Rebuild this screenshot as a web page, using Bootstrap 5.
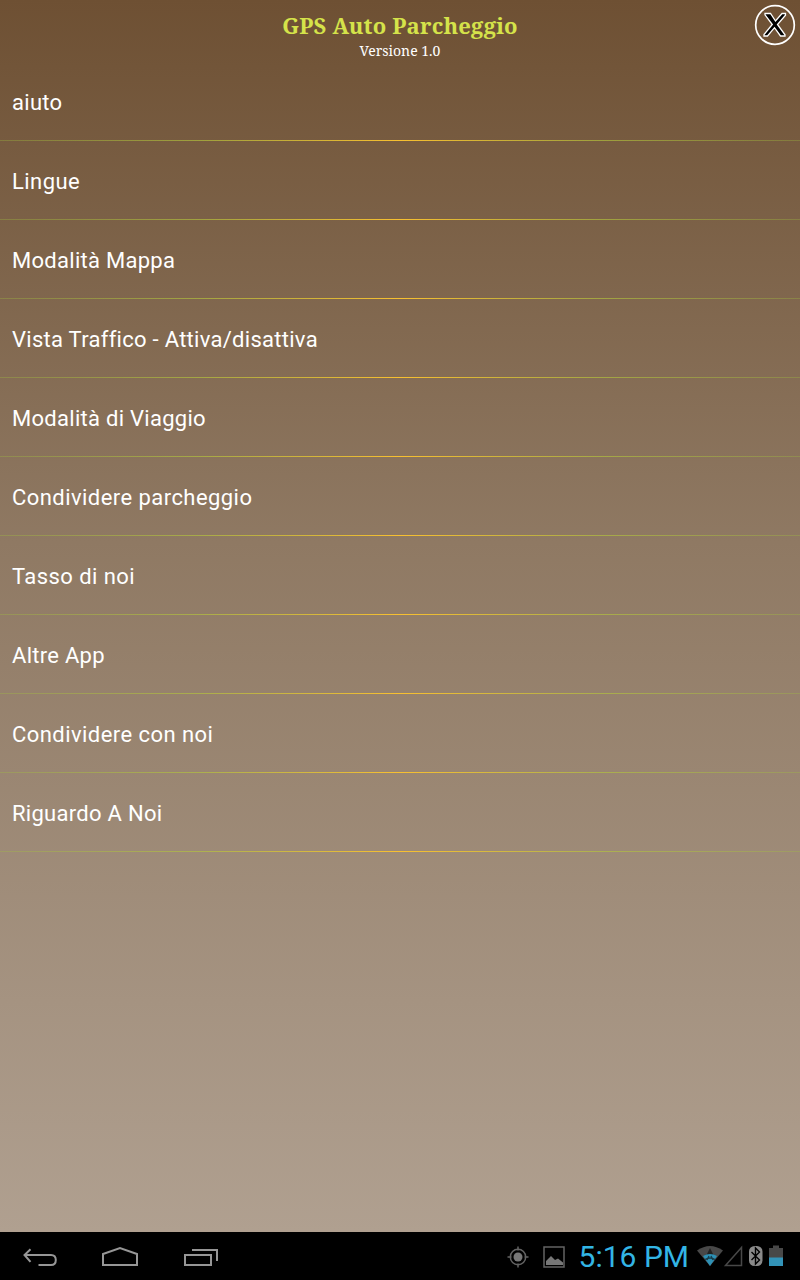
<!DOCTYPE html>
<html lang="it">
<head>
<meta charset="utf-8">
<meta name="viewport" content="width=device-width, initial-scale=1">
<title>GPS Auto Parcheggio</title>
<link href="https://cdn.jsdelivr.net/npm/bootstrap@5.3.0/dist/css/bootstrap.min.css" rel="stylesheet">
<style>
body{height:1280px;overflow:hidden;background:#000;font-family:Roboto,"Liberation Sans",sans-serif}
.screen{background:linear-gradient(#6e5033,#8f7963 44%,#b0a090)}
.heading{height:62px;font-family:"Noto Serif","DejaVu Serif Condensed","DejaVu Serif",serif}
.heading h1{font-size:22px;line-height:30px;padding-top:10px;color:#d5e34a;letter-spacing:.2px}
.heading p{font-size:14px;line-height:20px;padding-top:1px}
.close-btn{top:4px;right:4px;width:42px;height:42px}
.menu-row{height:79px;padding:1px 12px 0;font-size:22px;letter-spacing:.28px;color:#fff;text-decoration:none;background:linear-gradient(90deg,#a0c03c50,#b4c43ca8 25%,#f8c030 50%,#b4c43ca8 75%,#a0c03c50) bottom/100% 1px no-repeat}
.menu-row:nth-child(2),.menu-row:nth-child(6),.menu-row:nth-child(7),.menu-row:nth-child(9){letter-spacing:.44px}
.sysbar{height:48px;padding-right:16px}
.clock{font-size:30px;line-height:48px;padding-top:1px;margin-right:7px;color:#33b5e5}
</style>
</head>
<body class="d-flex flex-column">
<main class="screen flex-grow-1 position-relative">
  <header class="heading text-center">
    <h1 class="fw-bold m-0">GPS Auto Parcheggio</h1>
    <p class="text-white m-0">Versione 1.0</p>
    <button class="close-btn btn p-0 border-0 position-absolute d-flex" aria-label="Chiudi">
      <svg width="42" height="42" viewBox="0 0 42 42"><circle cx="21" cy="21" r="19.3" fill="none" stroke="#fff" stroke-width="1.7"/><path d="M11 9.500h5.500l5 7.500L28 9.500h3.500v1.800L23.500 20.500l7.500 10.300V32h-4.500l-6-8.300L13.500 32H10v-1.500l8.300-10L11 10.800Z" fill="#000" stroke="#fff" stroke-width="1.300"/></svg>
    </button>
  </header>
  <nav class="d-flex flex-column">
    <a class="menu-row d-flex align-items-center" href="#">aiuto</a>
    <a class="menu-row d-flex align-items-center" href="#">Lingue</a>
    <a class="menu-row d-flex align-items-center" href="#">Modalità Mappa</a>
    <a class="menu-row d-flex align-items-center" href="#">Vista Traffico - Attiva/disattiva</a>
    <a class="menu-row d-flex align-items-center" href="#">Modalità di Viaggio</a>
    <a class="menu-row d-flex align-items-center" href="#">Condividere parcheggio</a>
    <a class="menu-row d-flex align-items-center" href="#">Tasso di noi</a>
    <a class="menu-row d-flex align-items-center" href="#">Altre App</a>
    <a class="menu-row d-flex align-items-center" href="#">Condividere con noi</a>
    <a class="menu-row d-flex align-items-center" href="#">Riguardo A Noi</a>
  </nav>
</main>
<footer class="sysbar d-flex justify-content-between flex-shrink-0">
  <svg width="240" height="48" viewBox="0 0 240 48" fill="none" stroke="#969696" stroke-width="2"><path d="M30.500 17.200 24.500 23l6 6.800M24.500 23H51q4.800 0 4.800 5T51 33H38.500"/><path d="M103 33V22l17-6 17 6v11Z"/><path d="M185 23h26v10h-26ZM192 18h25v11"/></svg>
  <div class="d-flex">
    <svg width="72" height="48" viewBox="0 0 72 48"><g fill="none" stroke="#636363" stroke-width="1.5"><circle cx="11" cy="25" r="7.700"/><path d="M11 14.500v4M11 31.500v4M.5 25h4M17.500 25h4M37 15h20v20H37Z"/></g><circle cx="11" cy="25" r="4.500" fill="#777"/><path d="M39 33v-4l5-5 4 4 3-1.500 5 4V33Z" fill="#777"/></svg>
    <div class="clock">5:16 PM</div>
    <svg width="88" height="48" viewBox="0 0 88 48"><path d="M1 18.500Q14 9.500 27 18.500L14 34Z" fill="#484848"/><path d="m14 16-3.500 7h7Z" fill="#222"/><path d="M7 24q7-4 14 0l-7 10Z" fill="#2d91b6"/><path d="M9 27.500q5-3 10 0M13 24l-2 4M15 24l2 4" stroke="#173b48" fill="none" stroke-width="1.300"/><path d="M29.500 33.500h16v-18Z" fill="none" stroke="#484848" stroke-width="1.500"/><rect x="53" y="14" width="13.500" height="20" rx="5.500" fill="#8a8a8a"/><path d="m55.500 20 8 8-4 4V16l4 4-8 8" fill="none" stroke="#000" stroke-width="1.400"/><path d="M73 16h4v-2.500h6V16h4v18H73Z" fill="#484848"/><path d="M73 25.500h14V34H73Z" fill="#3293b8"/></svg>
  </div>
</footer>
<script src="https://cdn.jsdelivr.net/npm/bootstrap@5.3.0/dist/js/bootstrap.bundle.min.js"></script>
</body>
</html>
